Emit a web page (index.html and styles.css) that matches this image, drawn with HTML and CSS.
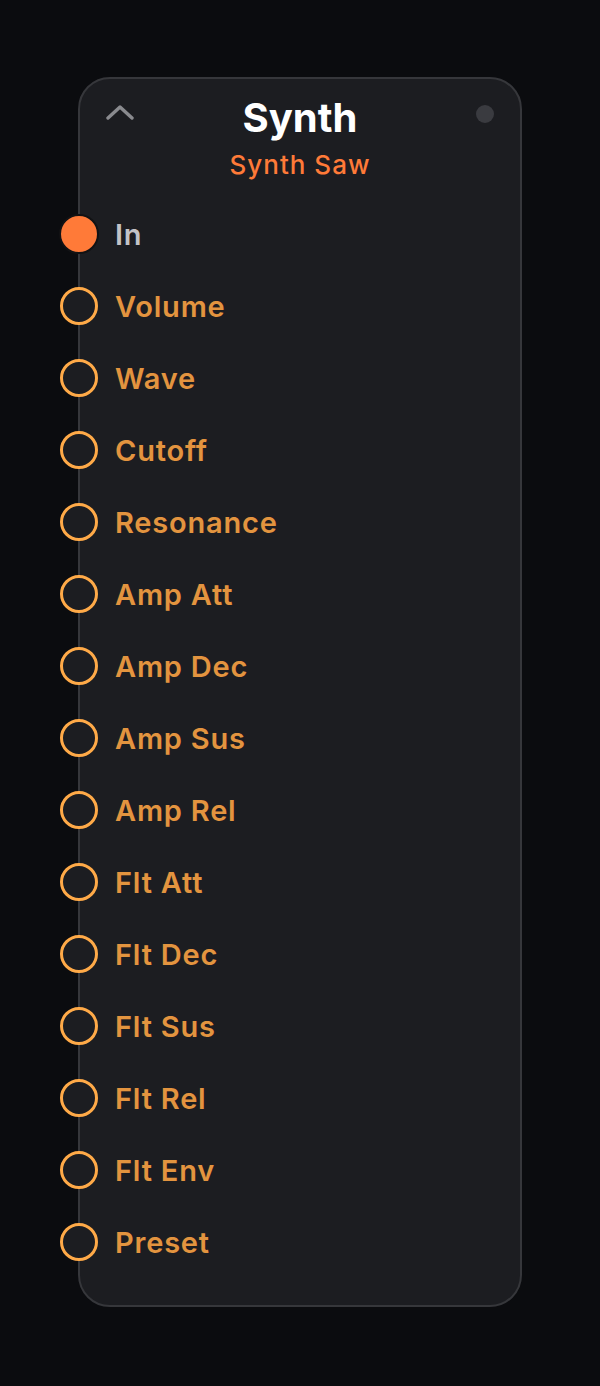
FILE: index.html
```html
<!DOCTYPE html>
<html lang="en">
<head>
    <meta charset="UTF-8">
    <meta name="viewport" content="width=device-width, initial-scale=1.0">
    <title>Synth Node</title>
    <link rel="stylesheet" href="styles.css">
</head>
<body>

    <div class="node">
        <!-- Header -->
        <div class="node-header">
            <div class="header-left">
                <svg class="chevron" width="28" height="16" viewBox="0 0 28 16">
                    <polyline points="2,13 14,2 26,13" fill="none" stroke="#8a8b8f" stroke-width="3.4" stroke-linecap="round" stroke-linejoin="round"/>
                </svg>
            </div>
            <div class="header-titles">
                <div class="title">Synth</div>
                <div class="subtitle">Synth Saw</div>
            </div>
            <div class="header-right">
                <span class="status-dot"></span>
            </div>
        </div>

        <!-- Ports -->
        <div class="ports">
            <div class="port connected"><span class="socket"></span><span class="label">In</span></div>
            <div class="port"><span class="socket"></span><span class="label">Volume</span></div>
            <div class="port"><span class="socket"></span><span class="label">Wave</span></div>
            <div class="port"><span class="socket"></span><span class="label">Cutoff</span></div>
            <div class="port"><span class="socket"></span><span class="label">Resonance</span></div>
            <div class="port"><span class="socket"></span><span class="label">Amp Att</span></div>
            <div class="port"><span class="socket"></span><span class="label">Amp Dec</span></div>
            <div class="port"><span class="socket"></span><span class="label">Amp Sus</span></div>
            <div class="port"><span class="socket"></span><span class="label">Amp Rel</span></div>
            <div class="port"><span class="socket"></span><span class="label">Flt Att</span></div>
            <div class="port"><span class="socket"></span><span class="label">Flt Dec</span></div>
            <div class="port"><span class="socket"></span><span class="label">Flt Sus</span></div>
            <div class="port"><span class="socket"></span><span class="label">Flt Rel</span></div>
            <div class="port"><span class="socket"></span><span class="label">Flt Env</span></div>
            <div class="port"><span class="socket"></span><span class="label">Preset</span></div>
        </div>
    </div>

</body>
</html>
```

FILE: styles.css
```css
body {
    margin: 0;
    padding-top: 77px;
    background-color: #0b0c0f;
    font-family: Inter, "Noto Sans", sans-serif;
    min-height: 100vh;
    box-sizing: border-box;
}
.node {
    width: 444px;
    margin: 0 auto;
    box-sizing: border-box;
    background-color: #1c1d21;
    border: 2px solid #36373b;
    border-radius: 32px;
    padding-bottom: 27px;
}
.node-header {
    display: grid;
    grid-template-columns: 1fr auto 1fr;
    padding: 15px 26px 0 26px;
}
.header-left {
    padding-top: 11px;
}
.chevron {
    display: block;
}
.header-right {
    display: flex;
    justify-content: flex-end;
    align-items: flex-start;
    padding-top: 11px;
}
.status-dot {
    width: 18px;
    height: 18px;
    border-radius: 50%;
    background-color: #3a3b40;
}
.header-titles {
    text-align: center;
}
.title {
    color: #ffffff;
    font-size: 40px;
    font-weight: 700;
    line-height: 48px;
}
.subtitle {
    color: #ff7a38;
    font-size: 26px;
    font-weight: 500;
    line-height: 30px;
    margin-top: 8px;
    letter-spacing: 1px;
}
.ports {
    margin-top: 18px;
}
.port {
    display: flex;
    align-items: center;
    height: 72px;
    margin-left: -20px;
}
.socket {
    flex: none;
    width: 38px;
    height: 38px;
    box-sizing: border-box;
    border-radius: 50%;
    border: 3px solid #ffaa48;
    background-color: #1c1d21;
}
.port.connected .socket {
    width: 40px;
    height: 40px;
    margin-left: -1px;
    margin-right: -1px;
    background-color: #ff7a38;
    border: 2px solid #121214;
}
.label {
    margin-left: 17px;
    color: #e3943f;
    font-size: 29px;
    font-weight: 600;
    letter-spacing: 0.8px;
}
.port.connected .label {
    color: #c3c3c7;
}
```
